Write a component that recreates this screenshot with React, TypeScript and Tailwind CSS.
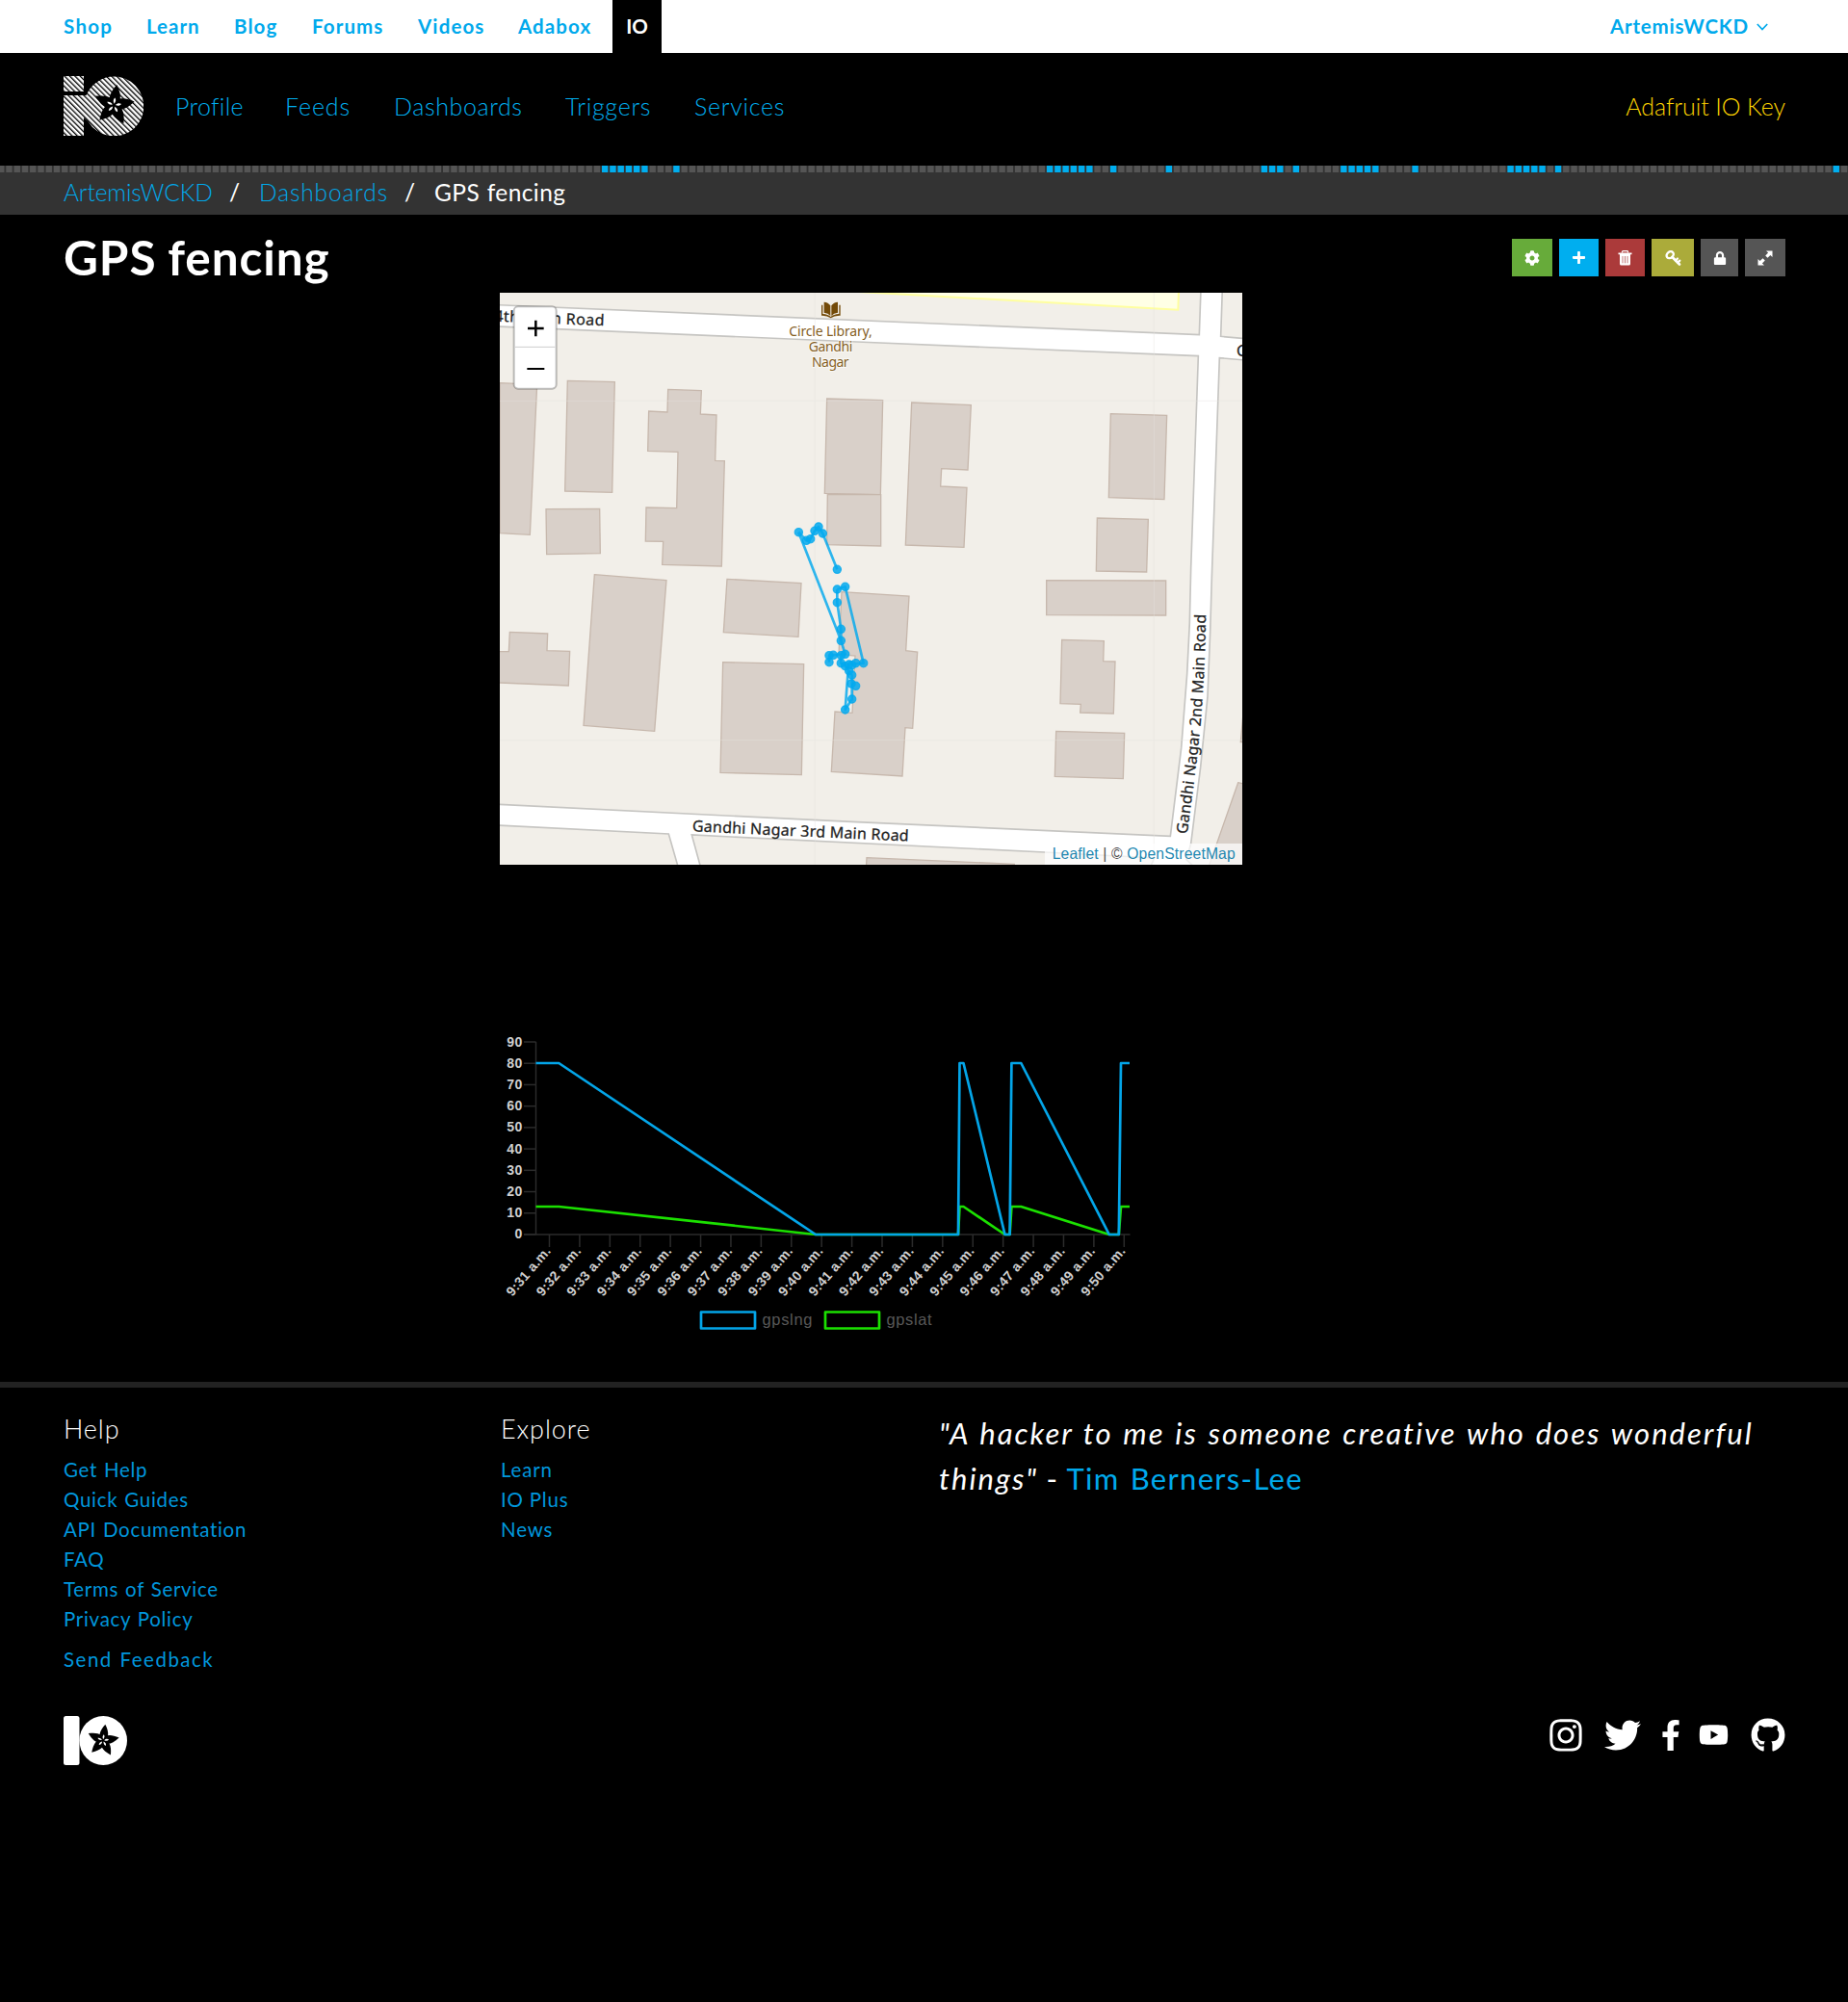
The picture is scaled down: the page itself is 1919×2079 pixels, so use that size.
import { FaCog, FaLock, FaPlus, FaInstagram, FaTwitter, FaFacebookF, FaYoutube, FaGithub } from "react-icons/fa";

const topLinks = [
  { label: "Shop", box: "w-[86px] tracking-[1.3px]" },
  { label: "Learn", box: "w-[91px] tracking-[1px]" },
  { label: "Blog", box: "w-[81px] tracking-[1.1px]" },
  { label: "Forums", box: "w-[110px] tracking-[1.1px]" },
  { label: "Videos", box: "w-[104px] tracking-[1.1px]" },
  { label: "Adabox", box: "w-[98px] tracking-[1.1px]" },
];

const navLinks = [
  { label: "Profile", box: "w-[114px] tracking-[0.3px]" },
  { label: "Feeds", box: "w-[113px] tracking-[0.9px]" },
  { label: "Dashboards", box: "w-[178px] tracking-[0.6px]" },
  { label: "Triggers", box: "w-[134px] tracking-[0.7px]" },
  { label: "Services", box: "w-[110px] tracking-[0.7px]" },
];

const helpLinks = ["Get Help", "Quick Guides", "API Documentation", "FAQ", "Terms of Service", "Privacy Policy"];
const exploreLinks = ["Learn", "IO Plus", "News"];

const PETALS = [8, 80, 152, 224, 296];

function Flower({ x, y, r, fill, inner }: { x: number; y: number; r: number; fill: string; inner: string }) {
  return (
    <g transform={`translate(${x} ${y}) scale(${r / 20})`}>
      {PETALS.map((a) => (
        <path key={a} transform={`rotate(${a})`} d="M0 2C-7 -3 -7 -10 0 -20.500C7 -10 7 -3 0 2Z" fill={fill} />
      ))}
      {PETALS.map((a) => (
        <path key={a} transform={`rotate(${a})`} d="M0 -1.500C-1.600 -4 -1.500 -5.500 0 -7.500C1.500 -5.500 1.600 -4 0 -1.500Z" fill={inner} />
      ))}
    </g>
  );
}

function HeaderLogo() {
  return (
    <svg width="83" height="62" viewBox="0 0 83 62" className="block">
      <defs>
        <pattern id="stripes" width="3.83" height="3.83" patternUnits="userSpaceOnUse" patternTransform="rotate(45)">
          <rect width="3.83" height="2.5" fill="#fff" />
        </pattern>
      </defs>
      <path d="M0 0H21V16H0ZM0 20H23.500A31 31 0 1 1 25.500 47L21 43V62H0Z" fill="url(#stripes)" />
      <Flower x={52.300} y={30.300} r={21} fill="#000" inner="#fff" />
    </svg>
  );
}

function FooterLogo() {
  return (
    <svg width="66" height="51" viewBox="0 0 66 51" className="block">
      <rect width="16.500" height="51" rx="2.500" fill="#fff" />
      <ellipse cx="41.200" cy="25.500" rx="24.800" ry="25.500" fill="#fff" />
      <Flower x={41} y={25.500} r={16.500} fill="#000" inner="#fff" />
    </svg>
  );
}

const BLUE_CELLS = new Set([
  75, 76, 77, 78, 79, 80, 84, 131, 132, 133, 134, 135, 136, 139, 146, 158, 159, 160, 162, 168, 169, 170, 171, 172, 177,
  189, 190, 191, 192, 193, 195, 230,
]);

function ActivityStrip() {
  return (
    <svg width="1919" height="7" viewBox="0 0 1919 7" className="block bg-[#333]">
      {Array.from({ length: 234 }, (_, i) => i - 1).map((i) => (
        <rect key={i} x={6.300 + i * 8.249} width="6.400" height="7" fill={BLUE_CELLS.has(i) ? "#00aeef" : "#555"} />
      ))}
    </svg>
  );
}

const buildings = [
  "27,293 143,298 121,766 27,761",
  "238,286 385,290 377,634 230,630",
  "171,686 338,685 340,824 173,827",
  "551,313 655,317 652,390 702,393 698,535 727,536 718,864 533,859 536,787 481,786 483,681 578,683 582,508 488,505 491,381 549,384",
  "1046,342 1220,347 1213,641 1039,637",
  "1048,640 1214,641 1214,801 1046,797",
  "1310,354 1495,362 1485,564 1403,560 1400,615 1482,619 1473,805 1291,798",
  "1930,389 2105,394 2097,656 1924,650",
  "1888,714 2047,718 2042,882 1885,879",
  "322,890 546,908 509,1378 288,1360",
  "735,904 966,917 957,1084 724,1070",
  "722,1163 974,1169 967,1514 714,1507",
  "0,1130 55,1130 58,1069 176,1074 174,1127 245,1129 241,1236 0,1226",
  "1092,944 1302,957 1292,1127 1328,1131 1313,1369 1290,1367 1281,1518 1060,1504 1071,1317 1125,1321 1134,1143 1083,1138",
  "1730,908 2102,909 2102,1017 1730,1016",
  "1778,1093 1909,1097 1907,1160 1944,1161 1939,1323 1835,1320 1837,1294 1773,1292",
  "1760,1378 1973,1384 1969,1526 1756,1519",
  "2327,1538 2350,1543 2350,1810 2232,1810",
  "2335,1412 2345,1412 2345,1300",
  "1170,1772 1630,1792 1630,1810 1168,1810",
];

const track = [
  "958,758 982,784 995,779 1008,754 1020,741 1033,762 1078,874",
  "958,758 1090,1096",
  "1078,936 1078,977 1090,1060 1090,1096 1103,1138 1053,1142 1053,1163",
  "1078,936 1103,928 1160,1166 1115,1170",
  "1090,1142 1090,1166 1103,1175 1124,1203 1124,1278 1103,1311 1112,1190",
];

const points = [
  [958, 758], [982, 784], [995, 779], [1008, 754], [1020, 741], [1033, 762], [1078, 874], [1078, 936], [1103, 928],
  [1078, 977], [1090, 1060], [1090, 1096], [1103, 1138], [1053, 1142], [1066, 1141], [1053, 1163], [1090, 1142],
  [1090, 1166], [1103, 1175], [1115, 1170], [1115, 1190], [1124, 1172], [1136, 1166], [1160, 1166], [1124, 1203],
  [1122, 1230], [1136, 1237], [1124, 1278], [1103, 1311],
];

const ROADS =
  "M0 49L2206 143L2211 0H2278L2273 148L2350 155V222L2269 215L2245 900L2240 1070L2232 1270L2210 1490L2180 1728L2166 1778L2200 1810H2050L2066 1773L1725 1755L625 1701L655 1810H585L553 1698L0 1670V1605L1140 1661L2116 1705L2150 1430L2168 1200L2176 1040L2180 870L2203 209L1140 165L0 116Z";

function StreetMap() {
  return (
    <svg width="771" height="594" viewBox="27 12 2313 1782" className="block bg-[#f2efe9]">
      <defs>
        <path id="second-main" d="M2168 1700C2201 1450 2221 1330 2227 1000" />
      </defs>
      <path d="M1090 6L2140 65L2142 6Z" fill="#ffffe5" stroke="#ffff9f" strokeWidth="6" />
      {buildings.map((p) => (
        <polygon key={p} points={p} fill="#d9d0c9" stroke="#c7b8ad" strokeWidth="4" />
      ))}
      <path d={ROADS} fill="#fff" stroke="#c6c5c2" strokeWidth="5" />
      <path d="M1009 0V1800M2065 0V1800M0 349H2350M0 1406H2350" stroke="#e6e4e0" strokeWidth="2" opacity="0.6" />

      <g fontFamily="Noto Sans, sans-serif" fontSize="48" fill="#222" stroke="#222" strokeWidth="0.8">
        <text transform="translate(10 101) rotate(2.3)" textLength="342">4th Main Road</text>
        <text transform="translate(626 1690) rotate(2.6)" textLength="675">Gandhi Nagar 3rd Main Road</text>
        <text x="2322" y="209">G</text>
        <text textLength="689">
          <textPath href="#second-main" textLength="689">Gandhi Nagar 2nd Main Road</textPath>
        </text>
      </g>

      <g fontFamily="Noto Sans, sans-serif" fontSize="42" fill="#85601f" stroke="#fff" strokeWidth="6" strokeOpacity="0.6" paintOrder="stroke">
        <text x="928" y="146" textLength="259">Circle Library,</text>
        <text x="989" y="195" textLength="137">Gandhi</text>
        <text x="999" y="244" textLength="116">Nagar</text>
      </g>
      <path
        d="M1037 41Q1050 42 1057 52V84Q1050 75 1037 74ZM1080 41Q1067 42 1060 52V84Q1067 75 1080 74ZM1029 50H1033V78Q1050 79 1058 87Q1066 79 1084 78V50H1088V83Q1070 82 1058 91Q1046 82 1029 83Z"
        fill="#734a08"
      />

      <g stroke="#03a9ee" strokeWidth="8" fill="none" opacity="0.82" strokeLinejoin="round">
        {track.map((p) => (
          <polyline key={p} points={p} />
        ))}
      </g>
      {points.map(([x, y]) => (
        <circle key={`${x}-${y}`} cx={x} cy={y} r="12.500" fill="#03a9ee" fillOpacity="0.85" stroke="#03a9ee" strokeWidth="3.500" strokeOpacity="0.8" />
      ))}

      <rect x="71" y="55" width="132" height="256" rx="13" fill="#fff" stroke="#000" strokeOpacity="0.25" strokeWidth="6" />
      <path d="M75 181H199" stroke="#ccc" strokeWidth="3" />
      <path d="M114 123H164M139 98V148" stroke="#000" strokeWidth="7.500" />
      <path d="M112 249H166" stroke="#000" strokeWidth="6" />

      <rect x="1725" y="1728" width="620" height="70" fill="#fff" fillOpacity="0.7" />
      <text x="1748" y="1777" fontFamily="Liberation Sans, sans-serif" fontSize="47" textLength="570" fill="#0078a8" fillOpacity="0.9">
        Leaflet<tspan fill="#333"> | © </tspan>OpenStreetMap
      </text>
    </svg>
  );
}

const xLabels = Array.from({ length: 20 }, (_, i) => `9:${31 + i} a.m.`);
const X_STEP = 31.410;

function LineChart() {
  return (
    <svg width="771" height="320" viewBox="519 1070 771 320" className="block" fontFamily="Liberation Sans, sans-serif">
      <g stroke="#2b2b2b" strokeWidth="1.500">
        <path d="M556.500 1082V1282M544 1282H1173.500" fill="none" />
        {Array.from({ length: 10 }, (_, i) => (
          <path key={i} d={`M544 ${1082 + i * 22.22}H556.500`} />
        ))}
        {xLabels.map((l, i) => (
          <path key={l} d={`M${570.5 + i * X_STEP} 1282V1295`} />
        ))}
      </g>
      <g fill="#d0d0d0" fontWeight="700" fontSize="14">
        {Array.from({ length: 10 }, (_, i) => (
          <text key={i} x="543" y={1086.5 + i * 22.22} textAnchor="end" letterSpacing="0.600">
            {90 - i * 10}
          </text>
        ))}
        {xLabels.map((l, i) => (
          <text key={l} transform={`translate(${572.5 + i * X_STEP} 1299.5) rotate(-49.5)`} textAnchor="end" fontSize="14" textLength="62.500">
            {l}
          </text>
        ))}
      </g>
      <g fill="none" strokeWidth="2.700" strokeLinejoin="round">
        <path
          d="M556.500 1253H580.300L847 1282H995L996.500 1253H1000.500L1043.500 1282H1048.600L1050.400 1253H1060.300L1151.800 1282H1161.800L1164 1253H1173"
          stroke="#1be000"
        />
        <path
          d="M556.500 1104H580.300L847 1282H995L996.500 1104H1000.500L1043.500 1282H1048.600L1050.400 1104H1060.300L1151.800 1282H1161.800L1164 1104H1173"
          stroke="#03a5e8"
        />
        <rect x="728" y="1362.500" width="56" height="17" stroke="#03a5e8" />
        <rect x="857" y="1362.500" width="56" height="17" stroke="#1be000" />
      </g>
      <g fill="#585858" fontSize="16.500">
        <text x="791.500" y="1375.500" textLength="52">gpslng</text>
        <text x="920.500" y="1375.500" textLength="47">gpslat</text>
      </g>
    </svg>
  );
}

function TrashIcon() {
  return (
    <svg width="15" height="16" viewBox="0 0 15 16">
      <path d="M4.500 2.500V1.500Q4.500 0.700 5.500 0.700H9.500Q10.500 0.700 10.500 1.500V2.500" fill="none" stroke="#fff" strokeWidth="1.300" />
      <path d="M0.500 2.500H14.500V4.200H0.500ZM2 4.200H13V14Q13 15.500 11.500 15.500H3.500Q2 15.500 2 14Z" fill="#fff" />
      <path d="M5 6V13.300M7.500 6V13.300M10 6V13.300" stroke="#c27a7a" strokeWidth="1" />
    </svg>
  );
}

function KeyIcon() {
  return (
    <svg width="17" height="16" viewBox="0 0 17 16" fill="none" stroke="#fff" strokeLinecap="round">
      <ellipse cx="5.200" cy="4.700" rx="3.900" ry="3.100" strokeWidth="2.400" transform="rotate(-40 5.200 4.700)" />
      <path d="M7.500 7L15 14.500" strokeWidth="2.600" />
      <path d="M11 10.500L13 8.500M13.300 12.600L15.300 10.600" strokeWidth="2.200" />
    </svg>
  );
}

function ExpandIcon() {
  return (
    <svg width="16" height="16" viewBox="0 0 16 16" fill="#fff">
      <path d="M9 0.500H15.500V7L13.400 4.900L10.500 7.800L8.200 5.500L11.100 2.600ZM7 15.500H0.500V9L2.600 11.100L5.500 8.200L7.800 10.500L4.900 13.400Z" />
    </svg>
  );
}

export default function App() {
  return (
    <div className="min-h-[2079px] w-[1919px] overflow-hidden bg-black font-['Lato','Open_Sans',sans-serif] text-white">
      <div className="flex h-[55px] items-center bg-white pl-[66px] pr-[83px] text-[20.500px] font-bold text-[#00a9ec]">
        {topLinks.map((l) => (
          <a key={l.label} className={l.box}>{l.label}</a>
        ))}
        <a className="flex h-full w-[51px] items-center justify-center bg-black text-white">IO</a>
        <a className="ml-auto flex items-center gap-[8px] tracking-[0.8px]">
          ArtemisWCKD
          <svg width="12" height="8" viewBox="0 0 12 8" fill="none" stroke="#00a9ec" strokeWidth="1.700">
            <path d="M0.800 1L6 6.500L11.200 1" />
          </svg>
        </a>
      </div>

      <header className="flex h-[117px] items-center pb-[7px] pl-[66px] pr-[65px] text-[25px] font-light text-[#00aeef]">
        <HeaderLogo />
        <nav className="ml-[33px] flex pt-px">
          {navLinks.map((l) => (
            <a key={l.label} className={l.box}>{l.label}</a>
          ))}
        </nav>
        <a className="ml-auto pt-[2px] tracking-[-0.1px] text-[#ffd600]">Adafruit IO Key</a>
      </header>

      <ActivityStrip />
      <div className="flex h-[44px] items-center bg-[#333] pb-px pl-[66px] text-[24.500px] font-light">
        <a className="w-[172px] tracking-[-0.1px] text-[#00a9ec]">ArtemisWCKD</a>
        <span className="w-[31px] font-normal">/</span>
        <a className="w-[151px] tracking-[0.9px] text-[#00a9ec]">Dashboards</a>
        <span className="w-[31px] font-normal">/</span>
        <span className="font-normal tracking-[0.4px] [word-spacing:1px]">GPS fencing</span>
      </div>

      <div className="flex h-[81px] items-center justify-between pl-[66px] pr-[65px] pt-[8px]">
        <h1 className="-mt-[2px] text-[49.500px] font-bold leading-[60px] tracking-[0.9px] [word-spacing:-1px]">GPS fencing</h1>
        <div className="flex h-[39px] gap-[7px]">
          <button className="flex w-[42px] items-center justify-center bg-[#67ab3a]"><FaCog size={16} /></button>
          <button className="flex w-[41px] items-center justify-center bg-[#00aeef]"><FaPlus size={15} /></button>
          <button className="flex w-[41px] items-center justify-center bg-[#ab3a3a]"><TrashIcon /></button>
          <button className="flex w-[44px] items-center justify-center bg-[#abab3a]"><KeyIcon /></button>
          <button className="flex w-[39px] items-center justify-center bg-[#555]"><FaLock size={14} /></button>
          <button className="flex w-[42px] items-center justify-center bg-[#555]"><ExpandIcon /></button>
        </div>
      </div>

      <main className="flex h-[1131px] flex-col gap-[172px] pl-[519px]">
        <StreetMap />
        <LineChart />
      </main>

      <footer className="border-t-[6px] border-[#222] pl-[66px] pr-[65px]">
        <div className="flex h-[298px]">
          <div className="w-[454px] pt-[27px]">
            <h2 className="mb-[11px] text-[27px] font-light leading-8 tracking-[0.9px]">Help</h2>
            <ul className="text-[20.500px] leading-[31px] tracking-[0.7px] text-[#0096dc] [word-spacing:1px]">
              {helpLinks.map((l) => (
                <li key={l}><a>{l}</a></li>
              ))}
              <li className="mt-[11px] tracking-[1.500px]"><a>Send Feedback</a></li>
            </ul>
          </div>
          <div className="w-[455px] pt-[27px]">
            <h2 className="mb-[11px] text-[27px] font-light leading-8 tracking-[0.9px]">Explore</h2>
            <ul className="text-[20.500px] leading-[31px] tracking-[0.8px] text-[#0096dc]">
              {exploreLinks.map((l) => (
                <li key={l}><a>{l}</a></li>
              ))}
            </ul>
          </div>
          <blockquote className="flex-1 whitespace-nowrap pt-[24px] text-[31px] leading-[47px] tracking-[2px] [word-spacing:1.500px]">
            <em>"A hacker to me is someone creative who does wonderful<br />things"</em>
            <span className="tracking-[1.300px] [word-spacing:-1px]"> - <a className="text-[#00a9ec] [word-spacing:2px]">Tim Berners-Lee</a></span>
          </blockquote>
        </div>
        <div className="mt-[43px] flex items-start justify-between">
          <FooterLogo />
          <div className="flex h-[39px] items-center">
            <FaInstagram size={38} className="mr-[21px]" />
            <FaTwitter size={38} className="mr-[15px]" />
            <FaFacebookF size={32} className="mr-[13px]" />
            <FaYoutube size={31} className="mr-[23px]" />
            <FaGithub size={36} />
          </div>
        </div>
      </footer>
    </div>
  );
}
